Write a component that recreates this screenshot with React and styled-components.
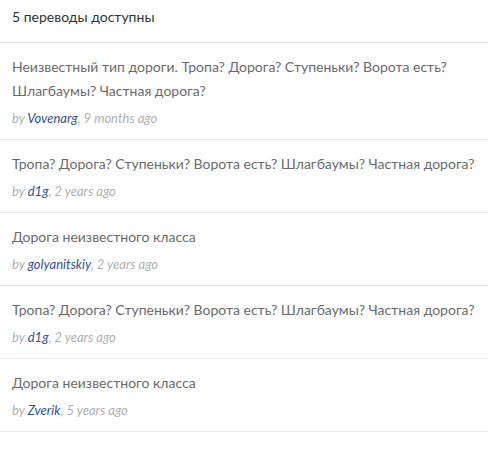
import React from "react";
import styled, { createGlobalStyle } from "styled-components";

const translations = [
  {
    text: "Неизвестный тип дороги. Тропа? Дорога? Ступеньки? Ворота есть? Шлагбаумы? Частная дорога?",
    user: "Vovenarg",
    when: "9 months ago",
  },
  {
    text: "Тропа? Дорога? Ступеньки? Ворота есть? Шлагбаумы? Частная дорога?",
    user: "d1g",
    when: "2 years ago",
  },
  { text: "Дорога неизвестного класса", user: "golyanitskiy", when: "2 years ago" },
  {
    text: "Тропа? Дорога? Ступеньки? Ворота есть? Шлагбаумы? Частная дорога?",
    user: "d1g",
    when: "2 years ago",
  },
  { text: "Дорога неизвестного класса", user: "Zverik", when: "5 years ago" },
];

export default function App() {
  return (
    <>
      <GlobalStyle />
      <Panel>
        <Header>{translations.length} переводы доступны</Header>
        <List>
          {translations.map((t, i) => (
            <Item key={i}>
              <Text>{t.text}</Text>
              <Meta>
                by <User>{t.user}</User>, {t.when}
              </Meta>
            </Item>
          ))}
        </List>
      </Panel>
    </>
  );
}

const GlobalStyle = createGlobalStyle`
  body {
    margin: 0;
    background: #fff;
    font-family: "Lato", "Liberation Sans", sans-serif;
  }
`;

const Panel = styled.div`
  width: 488px;
`;

const Header = styled.div`
  padding: 8px 12px 0;
  height: 43px;
  box-sizing: border-box;
  font-size: 14px;
  line-height: 18px;
  color: #333;
  border-bottom: 1px solid #ebebeb;
`;

const List = styled.div`
  display: flex;
  flex-direction: column;
`;

const Item = styled.div`
  padding: 12px 12px 12px;
  border-bottom: 1px solid #ebebeb;
`;

const Text = styled.div`
  font-size: 14px;
  line-height: 24px;
  color: #6b6b6b;
`;

const Meta = styled.div`
  margin-top: 6px;
  font-size: 13px;
  line-height: 18px;
  font-style: italic;
  color: #b0b0b0;
`;

const User = styled.span`
  color: #34528f;
`;
